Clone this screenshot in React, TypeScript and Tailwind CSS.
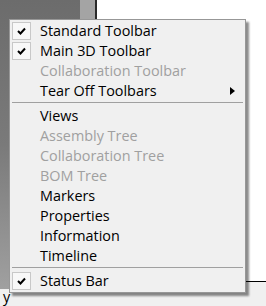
import React from "react";

type Item =
  | { kind: "sep" }
  | { kind: "item"; label: string; checked?: boolean; disabled?: boolean; submenu?: boolean };

const ITEMS: Item[] = [
  { kind: "item", label: "Standard Toolbar", checked: true },
  { kind: "item", label: "Main 3D Toolbar", checked: true },
  { kind: "item", label: "Collaboration Toolbar", disabled: true },
  { kind: "item", label: "Tear Off Toolbars", submenu: true },
  { kind: "sep" },
  { kind: "item", label: "Views" },
  { kind: "item", label: "Assembly Tree", disabled: true },
  { kind: "item", label: "Collaboration Tree", disabled: true },
  { kind: "item", label: "BOM Tree", disabled: true },
  { kind: "item", label: "Markers" },
  { kind: "item", label: "Properties" },
  { kind: "item", label: "Information" },
  { kind: "item", label: "Timeline" },
  { kind: "sep" },
  { kind: "item", label: "Status Bar", checked: true },
];

function CheckBox() {
  return (
    <div className="w-[19px] h-[18px] flex items-center justify-center border border-[#c8c8c8] bg-[#f8f8f8]">
      <svg width="9" height="8" viewBox="0 0 9 8">
        <path d="M1 4 L3.5 6.5 L8 1.5" fill="none" stroke="#000" strokeWidth="2" />
      </svg>
    </div>
  );
}

function MenuRow({ item }: { item: Item }) {
  if (item.kind === "sep") {
    return (
      <div className="h-[5px] pt-[1px]">
        <div className="mx-[2px] h-[1px] bg-[#a0a0a0]" />
      </div>
    );
  }
  return (
    <div className="flex items-center h-[20px] pl-[2px]">
      <div className="w-[19px] h-[18px]">{item.checked && <CheckBox />}</div>
      <span
        className={`ml-[9px] text-[14.4px] leading-[20px] whitespace-nowrap ${
          item.disabled ? "text-[#a0a0a0]" : "text-black"
        }`}
      >
        {item.label}
      </span>
      {item.submenu && (
        <div className="ml-auto mr-[10px] w-0 h-0 border-y-[4px] border-y-transparent border-l-[5px] border-l-black" />
      )}
    </div>
  );
}

export default function App() {
  return (
    <div
      className="relative w-[266px] h-[306px] overflow-hidden bg-[#f0f0f0]"
      style={{ fontFamily: '"Open Sans", "Noto Sans", sans-serif' }}
    >
      {/* Window content behind the popup */}
      <div className="flex">
        <div className="w-[97px] flex flex-col">
          <div className="h-[289px] flex">
            <div className="w-[80px] bg-gradient-to-b from-[#6c6c6c] via-[#7a7a7a] to-[#a0a0a0]" />
            <div className="w-[15px] bg-[#a4a4a4]" />
            <div className="w-[2px] bg-[#2a2a2a]" />
          </div>
          <div className="pl-[3px] text-[14.4px] leading-[16px] text-black">y</div>
        </div>
        <div className="flex-1 h-[282px] bg-white border-b border-black" />
      </div>

      {/* Context menu */}
      <div className="absolute left-[9px] top-[19px] w-[237px] border border-[#979797] bg-[#f0f0f0] py-[1px] shadow-[3px_3px_2px_rgba(0,0,0,0.45)]">
        {ITEMS.map((item, i) => (
          <MenuRow key={i} item={item} />
        ))}
      </div>
    </div>
  );
}
